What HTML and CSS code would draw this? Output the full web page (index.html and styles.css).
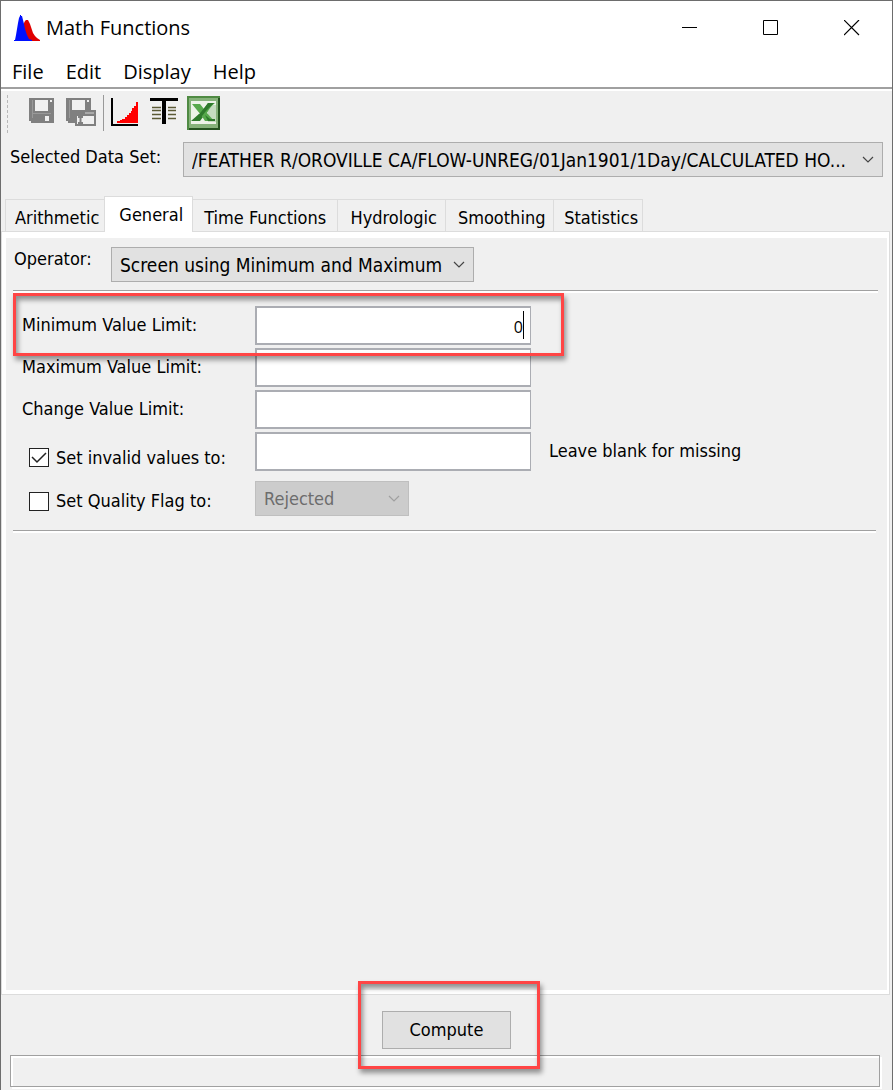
FILE: index.html
```html
<!DOCTYPE html>
<html lang="en">
<head>
<meta charset="utf-8">
<title>Math Functions</title>
<link rel="stylesheet" href="styles.css">
</head>
<body>
<div class="window">
  <header class="titlebar">
    <svg class="app-icon" width="26" height="27" viewBox="0 0 26 27"><path fill="#e00000" d="M9 26V10l2-4 1-1h2l1 2 1 2 1 3 1 3 1 3 2 3 2 2 3 2v1z"/><path fill="#0010ff" d="M0 26v-1h1l1-5 1-6 1-6 1-5 1-2V0h1v1h1l1 4 1 4 1 5 2 6 2 4 3 1v1z"/></svg>
    <h1 class="title">Math Functions</h1>
    <div class="window-buttons">
      <button class="window-button" aria-label="Minimize"><svg width="16" height="16" viewBox="0 0 16 16"><path d="M0 7.500h15" stroke="#000"/></svg></button>
      <button class="window-button" aria-label="Maximize"><svg width="16" height="16" viewBox="0 0 16 16"><path d="M.5 .5h14v14h-14z" fill="none" stroke="#000"/></svg></button>
      <button class="window-button" aria-label="Close"><svg width="16" height="16" viewBox="0 0 16 16"><path d="M0 0l15 15M15 0l-15 15" stroke="#000" stroke-width="1.200"/></svg></button>
    </div>
  </header>
  <nav class="menubar">
    <button class="menu">File</button>
    <button class="menu">Edit</button>
    <button class="menu">Display</button>
    <button class="menu">Help</button>
  </nav>
  <div class="toolbar">
    <span class="grip"></span>
    <button class="tool" aria-label="Save"><svg width="25" height="25" viewBox="0 0 25 25"><path fill="#808080" d="M0 0h25v25H2v-2H0z"/><path fill="#f0f0f0" d="M6 2h13v11H6zM21 2h2v2h-2zM16 18h4v5h-4z"/><path d="M3.500 2v18M4 15.500h18" stroke="#999"/></svg></button>
    <button class="tool" aria-label="Save as"><svg width="30" height="28" viewBox="0 0 30 28"><path fill="#808080" d="M0 0h25v25H2v-2H0z"/><path fill="#f0f0f0" d="M6 2h13v10H6zM21 2h2v2h-2z"/><path d="M3.500 2v18" stroke="#999"/><path fill="#808080" d="M9 12h21v16H9z"/><path fill="#f0f0f0" d="M11 18h17v8H11z"/><path fill="#aaa" d="M19 14h9v2h-9z"/><path d="M12 19h5M12 25h5M14.500 18v7" stroke="#808080" stroke-width="2"/></svg></button>
    <span class="divider"></span>
    <button class="tool" aria-label="Plot"><svg width="27" height="28" viewBox="0 0 27 28"><path fill="red" d="M6 25v-2h3v-1h2v-1h3v-2h2v-2h2v-2h2v-2h1v-3h2V8h2V4h2v21z"/><path fill="#000" d="M0 0h2v26h25v2H0z"/></svg></button>
    <button class="tool" aria-label="Tabulate"><svg width="28" height="26" viewBox="0 0 28 26"><path d="M2 9.500h9M2 12.500h9M2 16.500h9M2 20.500h9M18 9.500h8M18 12.500h8M18 16.500h8M18 20.500h8" stroke="#5b5a35" stroke-width="1.400"/><path fill="#000" d="M0 0h28v3H16v23h-4V3H0z"/></svg></button>
    <button class="tool" aria-label="Export to Excel"><svg width="33" height="34" viewBox="0 0 33 34"><path fill="#4f8a43" d="M0 0h33v34H0z"/><path fill="#24521f" d="M31 2h2v32H2v-2h29z"/><path fill="#86b27a" d="M2 2h29v30H2z"/><path fill="#edf3e8" d="M4 5h25v23H4z"/><path fill="#c6dcc0" d="M21 9h8v17h-8z"/><path fill="#2f7a2c" d="M4 25l8-7 4 3-3 4z"/><path fill="#57a94c" d="M5 8h8l4 5 4-6h7c-4 3-6 6-8 10l7 8h-9l-4-6z"/><path fill="#2f7a2c" d="M27 7l-8 8-8 10H6l8-9 7-9zM18 19l3 6h7v-2h-5z"/></svg></button>
  </div>
  <div class="dataset">
    <label for="dataset">Selected Data Set:</label>
    <span class="combo combo-wide">
      <select id="dataset"><option>/FEATHER R/OROVILLE CA/FLOW-UNREG/01Jan1901/1Day/CALCULATED HO...</option></select>
      <svg class="arrow" width="12" height="7" viewBox="0 0 12 7"><path d="M1 1l5 5 5-5" fill="none" stroke="#444" stroke-width="1.200"/></svg>
    </span>
  </div>
  <div class="tabs" role="tablist">
    <button class="tab" role="tab">Arithmetic</button>
    <button class="tab active" role="tab" aria-selected="true">General</button>
    <button class="tab tab-wide" role="tab">Time Functions</button>
    <button class="tab" role="tab">Hydrologic</button>
    <button class="tab" role="tab">Smoothing</button>
    <button class="tab" role="tab">Statistics</button>
  </div>
  <main class="pane">
    <div class="operator">
      <label for="operator">Operator:</label>
      <span class="combo combo-operator">
        <select id="operator"><option>Screen using Minimum and Maximum</option></select>
        <svg class="arrow" width="12" height="7" viewBox="0 0 12 7"><path d="M1 1l5 5 5-5" fill="none" stroke="#444" stroke-width="1.200"/></svg>
      </span>
    </div>
    <div class="limits">
      <div class="row">
        <label for="min">Minimum Value Limit:</label>
        <span class="field"><input id="min" type="text" value="0"><span class="caret"></span></span>
        <span class="callout callout-row"></span>
      </div>
      <div class="row">
        <label for="max">Maximum Value Limit:</label>
        <span class="field"><input id="max" type="text"></span>
      </div>
      <div class="row">
        <label for="change">Change Value Limit:</label>
        <span class="field"><input id="change" type="text"></span>
      </div>
      <div class="row">
        <label class="check"><input type="checkbox" checked>Set invalid values to:</label>
        <span class="field"><input type="text" aria-label="Invalid value replacement"></span>
        <span class="note">Leave blank for missing</span>
      </div>
      <div class="row row-flag">
        <label class="check"><input type="checkbox">Set Quality Flag to:</label>
        <span class="combo combo-flag">
          <select disabled aria-label="Quality flag"><option>Rejected</option></select>
          <svg class="arrow" width="12" height="7" viewBox="0 0 12 7"><path d="M1 1l5 5 5-5" fill="none" stroke="#a0a0a0" stroke-width="1.200"/></svg>
        </span>
      </div>
    </div>
  </main>
  <footer class="footer">
    <div class="compute-area">
      <button class="compute">Compute</button>
      <span class="callout callout-button"></span>
    </div>
    <div class="status"></div>
  </footer>
</div>
</body>
</html>
```
FILE: styles.css
```css
* { box-sizing: border-box; }
body {
  margin: 0;
  background: #f0f0f0;
  color: #000;
  font: 18px/24px "DejaVu Sans Condensed", "DejaVu Sans", sans-serif;
}
button, input, select { font: inherit; color: inherit; margin: 0; }
button { border: 0; padding: 0; background: none; white-space: nowrap; }
label { white-space: nowrap; }
svg { display: block; }
.window {
  min-height: 100vh;
  display: flex;
  flex-direction: column;
  border: 1px solid #6d6d6d;
  border-bottom: 0;
}
.titlebar {
  display: flex;
  align-items: center;
  height: 54px;
  padding-left: 13px;
  background: #fff;
}
.title { flex: 1; margin: 0 0 0 6px; font: 20px/28px "Open Sans", sans-serif; }
.window-buttons { display: flex; }
.window-button {
  width: 81px;
  height: 54px;
  display: flex;
  align-items: center;
  justify-content: center;
}
.menubar {
  display: flex;
  gap: 22px;
  height: 36px;
  padding: 3px 11px;
  background: #fff;
  border-bottom: 2px solid #fff;
  box-shadow: inset 0 -2px #a0a0a0;
}
.menu { font: 20px/28px "Open Sans", sans-serif; }
.toolbar { display: flex; align-items: flex-start; height: 43px; padding: 4px 6px 0; }
.tool { margin-top: 3px; }
.tool:nth-of-type(2) { margin-left: 12px; }
.tool:nth-of-type(3) { margin-left: 7px; }
.tool:nth-of-type(4) { margin-left: 12px; }
.tool:nth-of-type(5) { margin: 1px 0 0 9px; }
.grip { height: 38px; border-left: 1px dashed #b8b8b8; margin-right: 21px; }
.divider { width: 1px; height: 36px; margin-left: 7px; background: #999; }
.dataset { display: flex; padding: 8px 9px 0; }
.dataset label { width: 173px; margin-top: 3px; }
.combo { position: relative; height: 35px; }
.combo select {
  appearance: none;
  width: 100%;
  height: 100%;
  padding: 0 30px 0 8px;
  border: 1px solid #adadad;
  border-radius: 0;
  background: #e1e1e1;
  opacity: 1;
}
.combo select:disabled { background: #ccc; border-color: #bfbfbf; color: #6d6d6d; }
.arrow { position: absolute; right: 9px; top: 14px; pointer-events: none; }
.combo-wide { flex: 1; min-width: 0; }
.combo-wide select, .combo-operator select { font-size: 19px; }
.combo-operator select { padding-right: 24px; }
.tabs { display: flex; align-items: flex-end; padding: 19px 4px 0; }
.tab {
  height: 33px;
  padding: 3px 7px 0 11px;
  border: 1px solid #dcdcdc;
  border-width: 1px 1px 0 0;
}
.tab:first-child { padding: 3px 5px 0 9px; border-left-width: 1px; border-right: 0; }
.tab-wide { min-width: 145px; padding: 3px 8px 0; }
.tab:nth-child(n+4) { min-width: 108px; }
.tab:last-child { min-width: 89px; padding: 3px 4px 0 10px; }
.tab.active {
  position: relative;
  height: 36px;
  padding: 0 9px 0 14px;
  background: #fff;
  border-left-width: 1px;
}
.pane {
  flex: 1;
  margin: -1px 2px 0 0;
  padding: 9px 8px;
  border: 1px solid #dcdcdc;
  box-shadow: inset 0 6px #fff, inset 4px 0 #fff, inset -2px -4px #fff;
}
.operator {
  display: flex;
  padding: 6px 0 8px;
  margin: 0 3px;
  border-bottom: 1px solid #a0a0a0;
  box-shadow: 0 2px #fff;
}
.operator label { width: 98px; padding-left: 1px; }
.combo-operator { width: 363px; }
.limits {
  display: flex;
  flex-direction: column;
  gap: 3px;
  margin: 0 5px 0 3px;
  padding: 15px 0 14px 9px;
  border-bottom: 1px solid #a0a0a0;
  box-shadow: 0 2px #fff;
}
.row { position: relative; display: flex; height: 39px; }
.row > label { width: 233px; padding-top: 7px; }
.field { position: relative; width: 276px; }
.field input {
  width: 100%;
  height: 39px;
  padding: 3px 7px 0;
  border: 2px solid #abadb3;
  border-right-width: 1px;
  border-radius: 0;
  background: #fff;
  text-align: right;
  font: 16px/24px "Open Sans", sans-serif;
}
.caret { position: absolute; right: 7px; top: 5px; width: 1px; height: 28px; background: #000; }
.note { margin: 7px 0 0 18px; }
.row > .check { display: flex; align-items: center; gap: 7px; padding: 12px 0 0 7px; }
.check input {
  appearance: none;
  width: 20px;
  height: 19px;
  border: 1px solid #222;
  background: #fff;
}
.check input:checked { background: #fff url("data:image/svg+xml,%3Csvg xmlns='http://www.w3.org/2000/svg' viewBox='0 0 18 17'%3E%3Cpath d='M2 8l5 5 9-9' fill='none' stroke='%23222' stroke-width='1.500'/%3E%3C/svg%3E"); }
.row-flag { margin-top: 7px; height: 35px; }
.row-flag > .check { padding-top: 5px; }
.combo-flag { width: 154px; }
.callout {
  position: absolute;
  border: 3px solid #ff4545;
  box-shadow: 2px 4px 5px rgba(0,0,0,.4), inset 2px 4px 5px rgba(0,0,0,.4);
  pointer-events: none;
}
.callout-row { left: -9px; top: -13px; width: 551px; height: 63px; z-index: 1; }
.footer { padding: 16px 9px 3px; }
.compute-area { position: relative; width: 129px; margin: 0 auto; }
.compute { width: 129px; height: 38px; background: #e1e1e1; border: 1px solid #adadad; }
.callout-button { inset: -30px -29px -20px -24px; }
.status {
  height: 32px;
  margin: 6px 3px 0 0;
  border: 1px solid #a0a0a0;
  box-shadow: inset 2px 2px #fff, 2px 2px #fff;
}
```
